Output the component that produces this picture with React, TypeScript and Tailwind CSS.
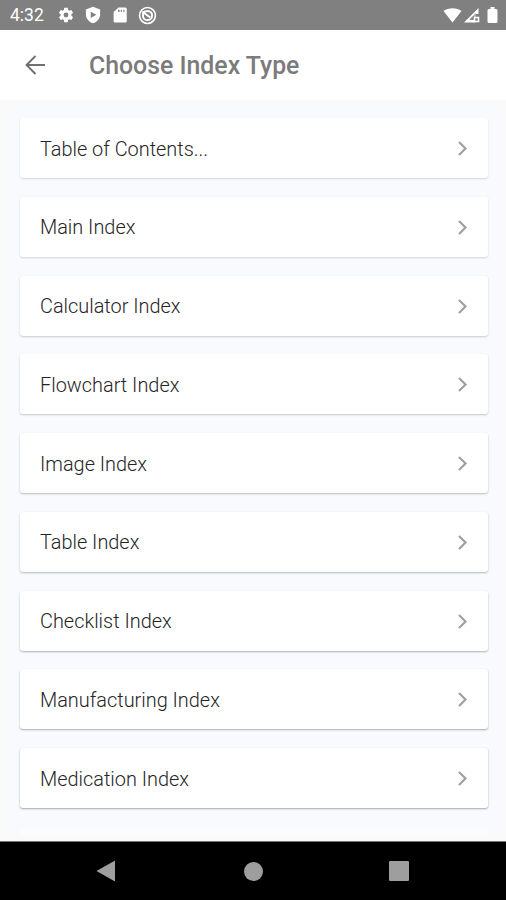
import React from "react";

const rows = [
  { label: "Table of Contents...", shadow: "shadow-[0_1px_2px_rgba(60,65,75,0.19)]" },
  { label: "Main Index", shadow: "shadow-[0_1px_2px_rgba(60,65,75,0.21)]" },
  { label: "Calculator Index", shadow: "shadow-[0_1px_2px_rgba(60,65,75,0.25)]" },
  { label: "Flowchart Index", shadow: "shadow-[0_1px_2px_rgba(60,65,75,0.29)]" },
  { label: "Image Index", shadow: "shadow-[0_1px_2px_rgba(60,65,75,0.33)]" },
  { label: "Table Index", shadow: "shadow-[0_1px_2px_rgba(60,65,75,0.36)]" },
  { label: "Checklist Index", shadow: "shadow-[0_1px_2px_rgba(60,65,75,0.39)]" },
  { label: "Manufacturing Index", shadow: "shadow-[0_1px_2px_rgba(60,65,75,0.42)]" },
  { label: "Medication Index", shadow: "shadow-[0_1px_2px_rgba(60,65,75,0.45)]" },
];

function StatusBar() {
  return (
    <header className="flex h-[30px] shrink-0 items-center bg-[#808080] pr-2 pl-[10px] text-white">
      <span className="w-[46px] pt-[2px] text-[17.500px] leading-none">4:32</span>
      <svg className="ml-px size-[18px]" viewBox="0 0 24 24" fill="currentColor">
        <path d="M19.14 12.94c.04-.3.06-.61.06-.94s-.02-.64-.07-.94l2.03-1.58a.49.49 0 0 0 .12-.61l-1.92-3.32a.49.49 0 0 0-.59-.22l-2.39.96a7 7 0 0 0-1.62-.94l-.36-2.54a.48.48 0 0 0-.48-.41h-3.84a.48.48 0 0 0-.47.41l-.36 2.54a7.400 7.400 0 0 0-1.620.94l-2.390-.96a.48.48 0 0 0-.59.22L2.740 8.870a.48.48 0 0 0 .12.61l2.030 1.580a7 7 0 0 0 0 1.880l-2.030 1.580a.49.49 0 0 0-.12.61l1.920 3.320c.12.22.37.29.59.22l2.390-.96c.5.38 1.030.7 1.620.94l.36 2.540c.05.24.24.41.48.41h3.840c.24 0 .44-.17.47-.41l.36-2.540a7.400 7.400 0 0 0 1.620-.94l2.390.96c.22.08.47 0 .59-.22l1.920-3.320a.48.48 0 0 0-.12-.61zM12 15.200a3.200 3.200 0 1 1 0-6.400 3.200 3.200 0 0 1 0 6.400" />
      </svg>
      <svg className="ml-[9px] size-[18px]" viewBox="0 0 24 24" fill="currentColor" fillRule="evenodd">
        <path d="M12 1 2.5 4.500V11c0 5.700 4 10.300 9.500 12 5.500-1.700 9.500-6.300 9.500-12V4.500ZM9 7.500l7.500 4.300L9 16Z" />
      </svg>
      <svg className="ml-[9px] size-[18px]" viewBox="0 0 24 24" fill="currentColor" fillRule="evenodd">
        <path d="M19 2H10L3.500 8v12a2 2 0 0 0 2 2H19a2 2 0 0 0 2-2V4a2 2 0 0 0-2-2ZM9.500 8V5h2v3Zm3.500 0V5h1.500v3Zm3.500 0V5H18v3Z" />
      </svg>
      <svg className="ml-[9px] size-[19px]" viewBox="0 0 24 24" fill="none" stroke="currentColor" strokeWidth="2">
        <circle cx="12" cy="12" r="10" />
        <circle cx="12" cy="12" r="5.800" strokeWidth="2.500" />
        <path d="m8 9 7.500 5.500M5 8.500 9 7" strokeWidth="2.500" />
      </svg>
      <svg className="ml-auto h-[17px] w-[19px]" viewBox="0 0 19 17" fill="currentColor">
        <path d="M.5 4C5.500.3 13.500.3 18.500 4L9.500 15.500Z" />
      </svg>
      <svg className="ml-px h-[17px] w-[17px]" viewBox="0 0 17 17">
        <path d="M1 15.500 15.500 1v6h-3v8.500Z" fill="currentColor" />
        <path d="m7 12.500 4-4v4ZM12 6.500v5" fill="#808080" stroke="#808080" strokeWidth=".8" />
        <path d="M11.500 10.500h4v4h-4Z" stroke="currentColor" strokeWidth="1.600" fill="#808080" />
      </svg>
      <svg className="ml-[7px] h-[17px] w-[11px]" viewBox="0 0 11 17" fill="currentColor">
        <path d="M3.500 0h4v2H9q1.500 0 1.500 1.500v11Q10.500 16 9 16H2Q.5 16 .5 14.500v-11Q.5 2 2 2h1.500Z" />
      </svg>
    </header>
  );
}

function IndexRow({ label, shadow }: { label: string; shadow: string }) {
  return (
    <button className={`flex h-[60px] w-full shrink-0 items-center justify-between rounded-[3px] bg-white pr-[18px] pl-5 text-left ${shadow}`}>
      <span className="pt-[3px] text-[19.900px] leading-6 font-light text-[#252525]">{label}</span>
      <svg className="h-4 w-[14px]" viewBox="0 0 14 16" fill="none" stroke="#a0a0a0" strokeWidth="2.200">
        <path d="m3 2 6.500 6.500L3 15" />
      </svg>
    </button>
  );
}

export default function App() {
  return (
    <div className="flex h-[900px] w-[506px] flex-col overflow-hidden bg-[#fafafa] font-['Roboto',sans-serif]">
      <StatusBar />
      <div className="flex h-[70px] shrink-0 items-center bg-white pl-[25px]">
        <svg className="size-5" viewBox="0 0 20 20" fill="none" stroke="#707070" strokeWidth="1.900">
          <path d="M20 10H2M10.500 1 1.500 10l9 9" />
        </svg>
        <h1 className="ml-11 pt-[2px] text-[24.850px] leading-[30px] font-medium text-[#7b7b7b]">Choose Index Type</h1>
      </div>
      <main className="min-h-0 flex-1 overflow-hidden pt-2 pr-2 pl-[10px]">
        <div className="flex h-[725px] flex-col gap-[18.750px] bg-[#f9fafd] px-[10px] pt-[10px]">
          {rows.map((row) => (
            <IndexRow key={row.label} {...row} />
          ))}
          <div className="h-2 shrink-0 rounded-t-[3px] bg-[#fbfcfe]" />
        </div>
      </main>
      <nav className="flex h-[59px] shrink-0 items-center border-t border-[#777] bg-black pl-24">
        <svg className="h-[22px] w-[19px]" viewBox="0 0 19 22" fill="#9e9e9e"><path d="M19 .5v21L.5 11Z" /></svg>
        <span className="ml-[129px] size-[19px] rounded-full bg-[#9e9e9e]" />
        <span className="ml-[126px] size-[20px] rounded-[1px] bg-[#9e9e9e]" />
      </nav>
    </div>
  );
}
